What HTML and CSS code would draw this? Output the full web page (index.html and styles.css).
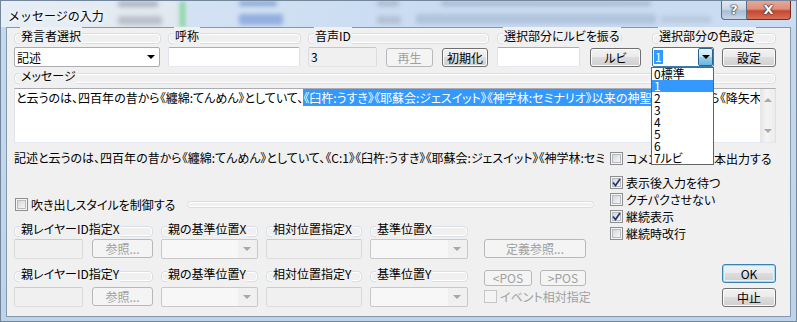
FILE: index.html
```html
<!DOCTYPE html>
<html lang="ja">
  <head>
    <meta charset="UTF-8" />
    <meta name="viewport" content="width=device-width, initial-scale=1.0" />
    <title>メッセージの入力</title>
    <link rel="stylesheet" href="styles.css">
  </head>
  <body>
    <div class="window">
      <div class="titlebar">
        <!-- blurred glass behind the caption -->
        <span class="blur b1"></span>
        <span class="blur b2"></span>
        <span class="blur b3"></span>
        <span class="blur b4"></span>
        <span class="blur b5"></span>
        <span class="blur b6"></span>
        <span class="blur b7"></span>
        <span class="blur b8"></span>
        <span class="blur b9"></span>
        <span class="blur b10"></span>
        <span class="title">メッセージの入力</span>
        <div class="caption">
          <span class="cap help">?</span>
          <span class="cap close">X</span>
        </div>
      </div>

      <div class="frame">
        <div class="client">
          <div class="row groups-top">
            <div class="group g1"><span>発言者選択</span></div>
            <div class="group g2"><span>呼称</span></div>
            <div class="group g3"><span>音声ID</span></div>
            <div class="group g4"><span>選択部分にルビを振る</span></div>
            <div class="group g5"><span>選択部分の色設定</span></div>
          </div>

          <div class="row controls-top">
            <div class="combo speaker"><span>記述</span><i class="arrow"></i></div>
            <div class="edit name"></div>
            <div class="edit readonly voice">3</div>
            <button type="button" class="btn play" disabled>再生</button>
            <button type="button" class="btn init">初期化</button>
            <div class="edit ruby"></div>
            <button type="button" class="btn ruby-btn">ルビ</button>
            <div class="combo color">
              <span class="sel">1</span>
              <span class="dd-btn"><i class="arrow"></i></span>
              <ul class="dropdown">
                <li>0標準</li>
                <li class="on">1</li>
                <li>2</li>
                <li>3</li>
                <li>4</li>
                <li>5</li>
                <li>6</li>
                <li>7ルビ</li>
              </ul>
            </div>
            <button type="button" class="btn set">設定</button>
          </div>

          <div class="group msg-group"><span>メッセージ</span></div>
          <div class="memo">
            <div class="memo-text">と云うのは、四百年の昔から《纏綿:てんめん》としていて、<span class="hl">《臼杵:うすき》《耶蘇会:ジェスイット》《神学林:セミナリオ》以来の神聖家族</span>たるから《降矢木:ふりやぎ》の館に</div>
            <div class="vscroll"><i class="up"></i><i class="down"></i></div>
          </div>

          <div class="preview-row">
            <div class="preview">記述と云うのは、四百年の昔から《纏綿:てんめん》としていて、《C:1》《臼杵:うすき》《耶蘇会:ジェスイット》《神学林:セミナリオ》以来の神聖家族</div>
            <label class="check"><span class="box"></span>コメントを全て台本出力する</label>
          </div>

          <div class="lower">
            <div class="lower-left">
              <div class="balloon">
                <label class="check"><span class="box"></span>吹き出しスタイルを制御する</label>
                <div class="line"></div>
              </div>

              <div class="row glabels">
                <div class="group c1"><span>親レイヤーID指定X</span></div>
                <div class="group c2"><span>親の基準位置X</span></div>
                <div class="group c3"><span>相対位置指定X</span></div>
                <div class="group c4"><span>基準位置X</span></div>
              </div>
              <div class="row gctrls">
                <div class="edit off layer"></div>
                <button type="button" class="btn ref" disabled>参照...</button>
                <div class="combo off c2"><i class="arrow"></i></div>
                <div class="edit off c3"></div>
                <div class="combo off c4"><i class="arrow"></i></div>
                <button type="button" class="btn c5" disabled>定義参照...</button>
              </div>

              <div class="row glabels y">
                <div class="group c1"><span>親レイヤーID指定Y</span></div>
                <div class="group c2"><span>親の基準位置Y</span></div>
                <div class="group c3"><span>相対位置指定Y</span></div>
                <div class="group c4"><span>基準位置Y</span></div>
                <div class="pos">
                  <button type="button" class="btn small prev" disabled>&lt;POS</button>
                  <button type="button" class="btn small next" disabled>&gt;POS</button>
                </div>
              </div>
              <div class="row gctrls y">
                <div class="edit off layer"></div>
                <button type="button" class="btn ref" disabled>参照...</button>
                <div class="combo off c2"><i class="arrow"></i></div>
                <div class="edit off c3"></div>
                <div class="combo off c4"><i class="arrow"></i></div>
                <label class="check off event"><span class="box"></span>イベント相対指定</label>
              </div>
            </div>

            <div class="lower-right">
              <label class="check"><span class="box"><svg width="9" height="9" viewBox="0 0 9 9"><path d="M1 4.5 L3.5 7.5 L8 1" fill="none" stroke="#25386e" stroke-width="1.7"/></svg></span>表示後入力を待つ</label>
              <label class="check"><span class="box"></span>クチパクさせない</label>
              <label class="check"><span class="box"><svg width="9" height="9" viewBox="0 0 9 9"><path d="M1 4.5 L3.5 7.5 L8 1" fill="none" stroke="#25386e" stroke-width="1.7"/></svg></span>継続表示</label>
              <label class="check"><span class="box"></span>継続時改行</label>
              <button type="button" class="btn default ok">OK</button>
              <button type="button" class="btn cancel">中止</button>
            </div>
          </div>
        </div>
      </div>
    </div>
  </body>
</html>
```

FILE: styles.css
```css
* {
  box-sizing: border-box;
}
body {
  margin: 0;
  font-family: "Noto Sans CJK JP", sans-serif;
  font-size: 12px;
  color: #000;
  background: #c2d6ec;
}
.window {
  width: 797px;
  height: 322px;
  border: 1px solid #72869c;
  background: linear-gradient(#c6d9ee, #bed3ea);
  display: flex;
  flex-direction: column;
}

/* caption */
.titlebar {
  position: relative;
  flex: none;
  height: 26px;
  padding: 6px 0 0 7px;
  overflow: hidden;
  background: linear-gradient(to right, #e6eef7 0, #e2e8ef 170px, #d3e2f3 190px, #c9dcf2 420px, #cadcf1 100%);
}
.blur {
  position: absolute;
  border-radius: 2px;
  filter: blur(2px);
}
.b1 { left: 117px; top: 0; width: 40px; height: 6px; background: #aeb6c0; }
.b2 { left: 117px; top: 15px; width: 44px; height: 9px; background: #bac1ca; }
.b3 { left: 179px; top: 0; width: 5px; height: 27px; background: #7fd69c; }
.b4 { left: 238px; top: 0; width: 38px; height: 5px; background: #8aa7d8; }
.b5 { left: 238px; top: 13px; width: 44px; height: 11px; background: #94afdf; }
.b6 { left: 376px; top: 0; width: 22px; height: 5px; background: #aab8c9; }
.b7 { left: 376px; top: 15px; width: 24px; height: 8px; background: #b3c1d3; }
.b8 { left: 440px; top: 0; width: 210px; height: 5px; background: #a9bad2; }
.b9 { left: 415px; top: 13px; width: 240px; height: 10px; background: #b0c3dc; }
.b10 { left: 660px; top: 15px; width: 50px; height: 7px; background: #b8c9de; }
.title {
  position: relative;
  line-height: 15px;
  text-shadow: 0 0 4px #fff, 0 0 8px #fff, 0 0 12px #fff;
}
.caption {
  position: absolute;
  top: 0;
  right: 5px;
  display: flex;
}
.cap {
  height: 19px;
  color: #fff;
  font-family: "DejaVu Sans", sans-serif;
  font-weight: bold;
  font-size: 13px;
  line-height: 18px;
  text-align: center;
  text-shadow: 0 0 1px #223, 0 0 1px #223, 0 0 2px #334;
}
.help {
  width: 26px;
  border: 1px solid #5d6d82;
  border-top: none;
  border-radius: 0 0 0 4px;
  background: linear-gradient(#e2e9f2 0, #cad6e4 45%, #aabcd1 55%, #c7d6e8 100%);
}
.close {
  width: 44px;
  border: 1px solid #6e2c22;
  border-top: none;
  border-left: none;
  border-radius: 0 0 4px 0;
  background: linear-gradient(#e9a797 0, #dc8e7b 45%, #c5462f 55%, #d77157 100%);
}

/* window body */
.frame {
  flex: 1;
  display: flex;
  padding: 0 5px 4px 5px;
}
.client {
  flex: 1;
  padding: 1px 0 0 7px;
  border: 1px solid #8498ae;
  background: #f0f0f0;
  font-feature-settings: "palt";
}
.row {
  display: flex;
}

/* flat group boxes used as captions */
.group {
  position: relative;
  flex: none;
  height: 13px;
  line-height: 13px;
  white-space: nowrap;
}
.group::before {
  content: "";
  position: absolute;
  left: 0;
  right: 0;
  top: 4px;
  height: 9px;
  border: 1px solid #d5dfe5;
  border-radius: 4px;
  box-shadow: inset 0 0 0 1px #fff;
}
.group span {
  position: relative;
  margin-left: 6px;
  padding: 0 1px;
  background: #f0f0f0;
}
.g1 { width: 147px; }
.g2 { width: 133px; margin-left: 7px; }
.g3 { width: 181px; margin-left: 7px; }
.g4 { width: 125px; margin-left: 8px; }
.g5 { width: 124px; margin-left: 30px; }

.controls-top {
  margin-top: 5px;
  height: 20px;
  align-items: flex-end;
}
.speaker { width: 146px; }
.name { width: 132px; margin-left: 8px; }
.voice { width: 69px; margin-left: 8px; }
.play { width: 47px; margin-left: 9px; }
.init { width: 46px; margin-left: 9px; }
.ruby { width: 83px; margin-left: 9px; }
.ruby-btn { width: 51px; margin-left: 10px; }
.color { width: 62px; margin-left: 11px; }
.set { width: 54px; margin-left: 8px; }

/* controls */
.edit {
  flex: none;
  height: 20px;
  padding: 0 2px;
  line-height: 18px;
  background: #fff;
  border: 1px solid;
  border-color: #abadb3 #dbdfe6 #e3e9ef #e2e3ea;
  border-radius: 2px;
}
.edit.readonly {
  background: #f0f0f0;
  border-color: #c4c6cb #dadce0 #e2e4e7 #dadce0;
}
.edit.off {
  background: #f0f0f0;
  border-color: #cbcbcb #d9d9d9 #dedede #d9d9d9;
}
.combo {
  position: relative;
  flex: none;
  display: flex;
  align-items: center;
  justify-content: space-between;
  height: 20px;
  padding: 0 4px 0 2px;
  background: #fff;
  border: 1px solid #abadb3;
  border-radius: 2px;
}
.combo.off {
  background: linear-gradient(to right, #f7f7f7 80%, #f0f0f0 80%);
  border-color: #c9c9c9;
  justify-content: flex-end;
  padding-right: 6px;
}
.arrow {
  width: 0;
  height: 0;
  border-left: 4px solid transparent;
  border-right: 4px solid transparent;
  border-top: 4px solid #000;
}
.combo.off .arrow {
  border-top-color: #a6a6a6;
}
.color {
  padding: 0;
  border-color: #3d7bad;
}
.sel {
  margin-left: 1px;
  padding: 0 1px;
  line-height: 14px;
  background: #3399ff;
  color: #fff;
}
.dd-btn {
  display: flex;
  align-items: center;
  justify-content: center;
  width: 15px;
  height: 18px;
  border: 1px solid #2c628b;
  border-radius: 2px;
  background: linear-gradient(#e5f4fc 0, #c4e5f6 50%, #98d1ef 50%, #6cb5de 100%);
}
.dropdown {
  position: absolute;
  left: -2px;
  top: 19px;
  z-index: 2;
  width: 63px;
  margin: 0;
  padding: 0;
  list-style: none;
  background: #fff;
  border: 1px solid #646464;
}
.dropdown li {
  height: 12px;
  padding-left: 2px;
  line-height: 12px;
}
.dropdown li.on {
  background: #3399ff;
  color: #fff;
}

.btn {
  flex: none;
  height: 19px;
  padding: 0;
  font: inherit;
  line-height: 17px;
  color: #000;
  border: 1px solid #707070;
  border-radius: 3px;
  background: linear-gradient(#f2f2f2 0, #ebebeb 45%, #dddddd 50%, #cfcfcf 100%);
  box-shadow: inset 0 0 0 1px #fcfcfc;
}
.btn:disabled {
  color: #a0a0a0;
  border-color: #b5b9bc;
  background: #f4f4f4;
  box-shadow: none;
}
.btn.default {
  border-color: #3c7fb1;
  box-shadow: inset 0 0 0 1px #9fdaf7, inset 0 0 0 2px #e0f3fc;
}

/* message */
.msg-group {
  width: 762px;
  margin-top: 2px;
}
.memo {
  display: flex;
  width: 762px;
  height: 55px;
  margin-top: 6px;
  background: #fff;
  border: 1px solid;
  border-color: #abadb3 #dbdfe6 #e3e9ef #e2e3ea;
}
.memo-text {
  flex: 1;
  padding: 2px 0 0 1px;
  line-height: 13px;
  white-space: nowrap;
  overflow: hidden;
}
.hl {
  background: #3399ff;
  color: #fff;
}
.vscroll {
  flex: none;
  width: 15px;
  display: flex;
  flex-direction: column;
  justify-content: space-between;
  align-items: center;
  padding: 9px 0;
  background: linear-gradient(to right, #e5e5e5, #f4f4f4 45%, #ececec);
}
.up, .down {
  width: 0;
  height: 0;
  border-left: 4px solid transparent;
  border-right: 4px solid transparent;
}
.up { border-bottom: 4px solid #a9a9a9; }
.down { border-top: 4px solid #a9a9a9; }

.preview-row {
  display: flex;
  align-items: center;
  height: 16px;
  margin-top: 7px;
}
.preview {
  width: 590px;
  line-height: 16px;
  white-space: nowrap;
  overflow: hidden;
}
.preview-row .check {
  margin-left: 6px;
}

/* checkboxes */
.check {
  display: flex;
  align-items: center;
  height: 17px;
  white-space: nowrap;
}
.box {
  flex: none;
  display: flex;
  align-items: center;
  justify-content: center;
  width: 13px;
  height: 13px;
  margin-right: 3px;
  border: 1px solid #8e8f8f;
  background: linear-gradient(135deg, #c9cdd2, #f4f4f4 75%, #fff);
  box-shadow: inset 0 0 0 1px #f4f4f4, inset 0 0 0 2px #b8bcc2;
}
.check.off {
  color: #a0a0a0;
}
.check.off .box {
  border-color: #c6c6c6;
  background: #f4f4f4;
  box-shadow: none;
}

/* lower part */
.lower {
  display: flex;
}
.lower-left {
  flex: none;
  width: 596px;
}
.lower-right {
  flex: none;
  width: 166px;
  display: flex;
  flex-direction: column;
  padding-top: 8px;
}
.balloon {
  display: flex;
  align-items: center;
  height: 17px;
  margin-top: 30px;
  padding-left: 1px;
}
.balloon .line {
  flex: 1;
  height: 7px;
  margin: 0 16px 0 12px;
  border: 1px solid #d5dfe5;
  border-radius: 4px;
  box-shadow: inset 0 0 0 1px #fff;
}
.glabels {
  height: 13px;
  margin-top: 9px;
}
.glabels.y {
  margin-top: 8px;
}
.gctrls {
  height: 20px;
  margin-top: 4px;
  align-items: flex-start;
}
.gctrls.y {
  margin-top: 7px;
}
.c1 { width: 139px; }
.c2 { width: 97px; margin-left: 8px; }
.c3 { width: 96px; margin-left: 8px; }
.c4 { width: 98px; margin-left: 8px; }
.c5 { width: 102px; margin-left: 16px; }
.layer { width: 69px; }
.ref { width: 61px; margin-left: 9px; }
.pos {
  display: flex;
  margin: 3px 0 0 16px;
}
.btn.small {
  height: 16px;
  line-height: 14px;
}
.prev { width: 48px; }
.next { width: 46px; margin-left: 8px; }
.event {
  margin: 1px 0 0 16px;
}
.ok {
  align-self: flex-end;
  width: 54px;
  margin-top: 22px;
}
.cancel {
  align-self: flex-end;
  width: 54px;
  margin-top: 5px;
}
```
